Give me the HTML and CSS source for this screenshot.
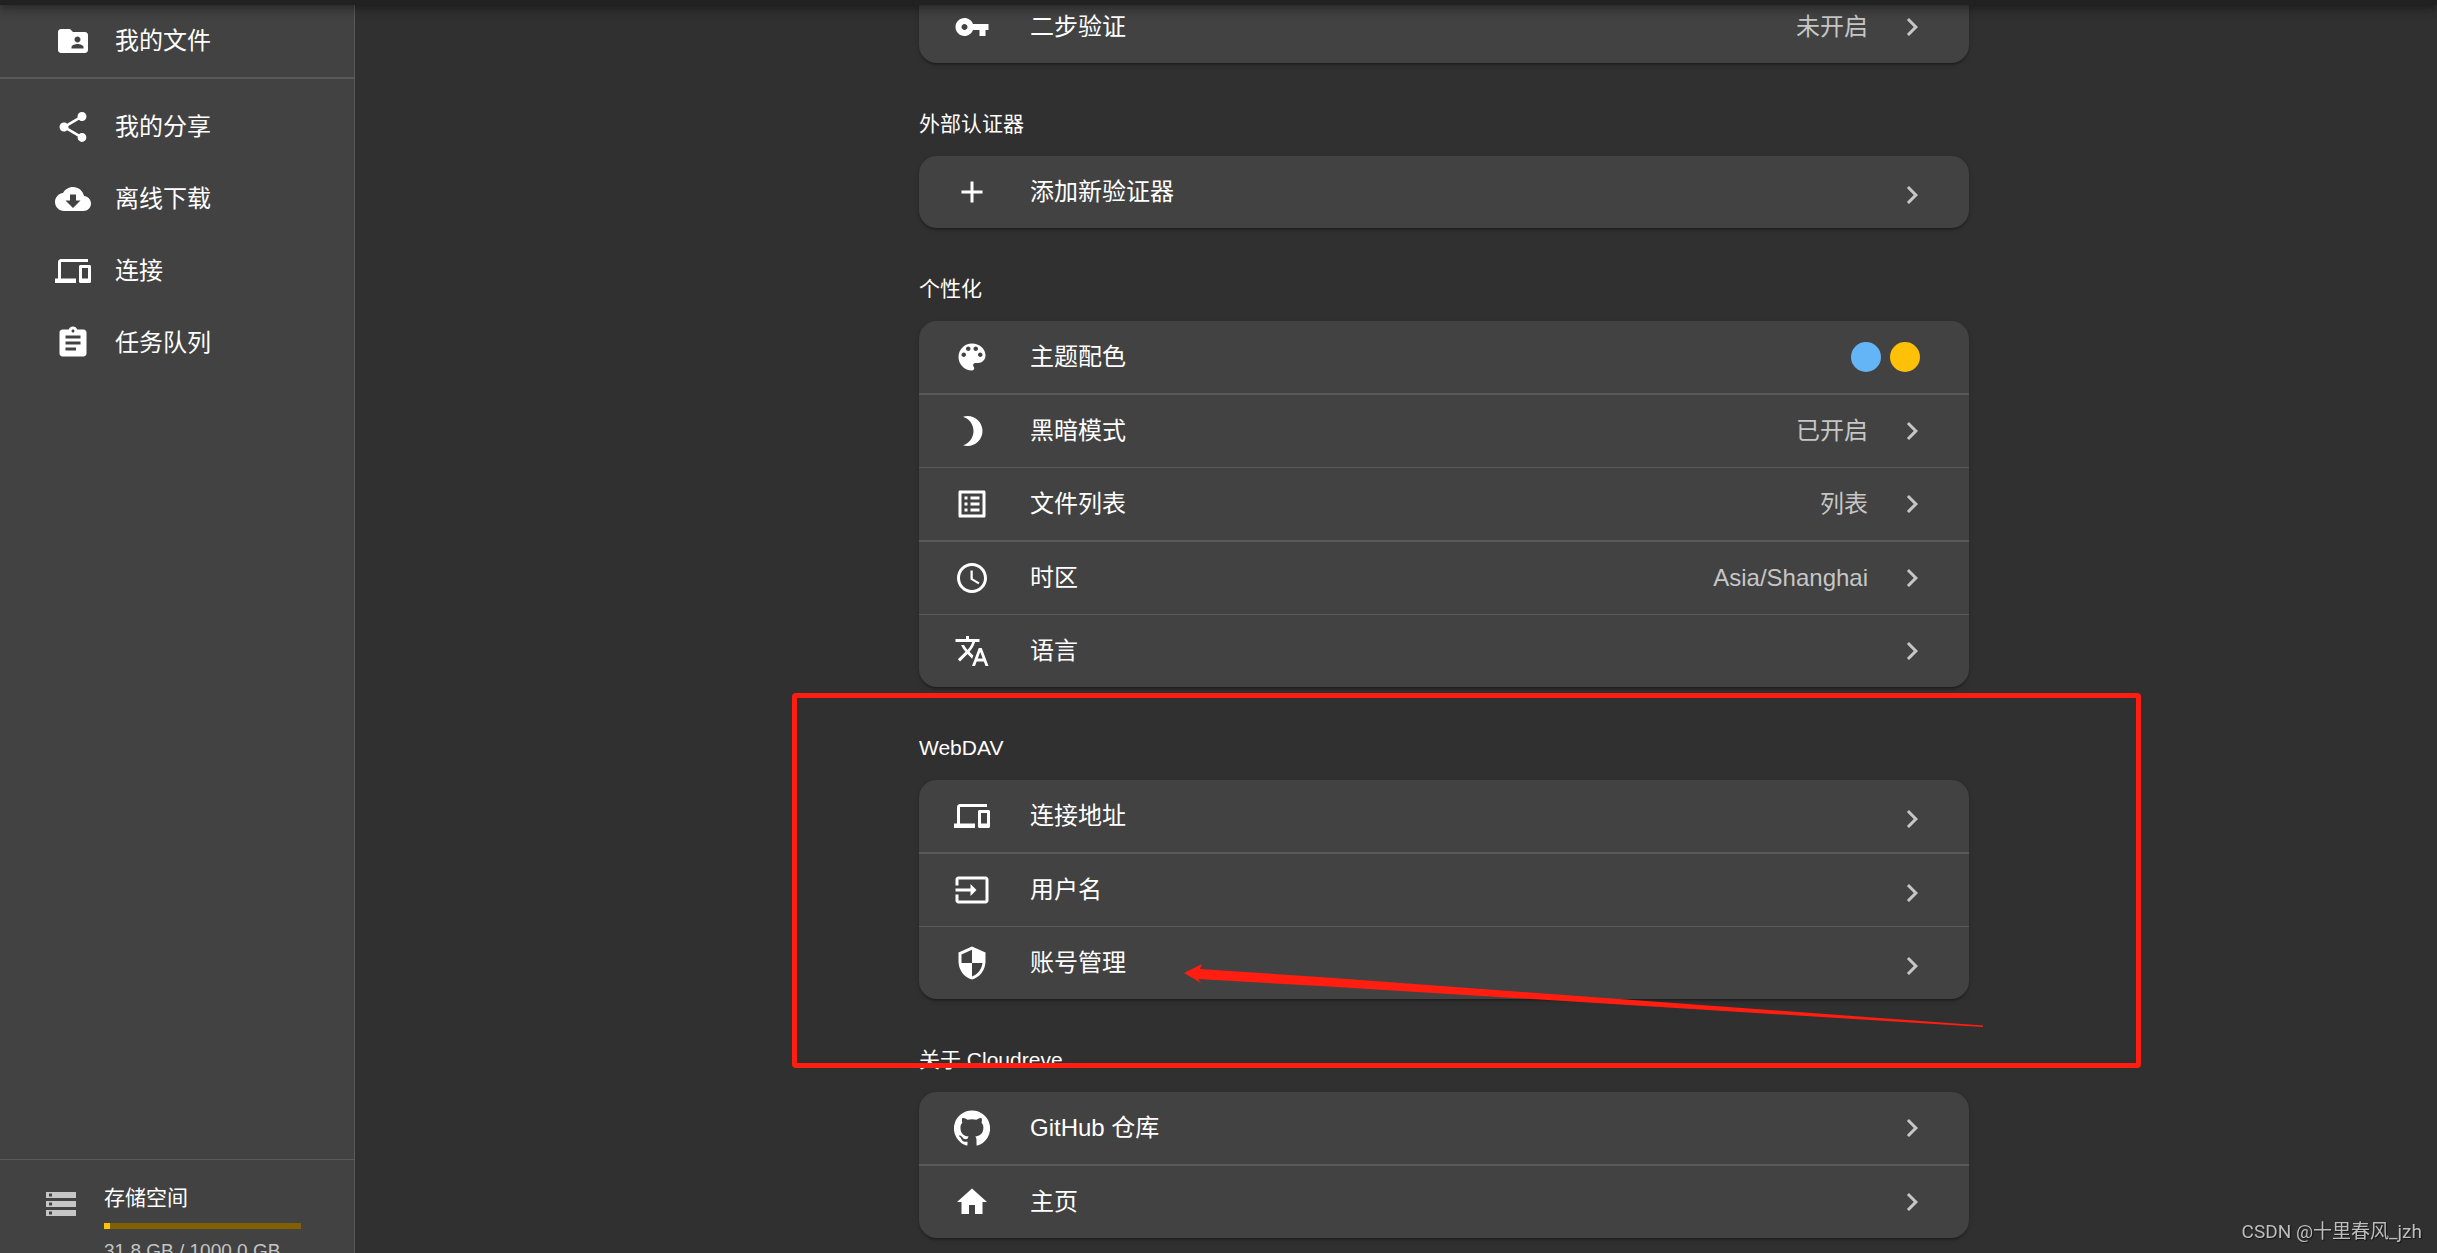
FILE: index.html
```html
<!DOCTYPE html>
<html lang="zh-CN">
<head>
<meta charset="utf-8">
<meta name="viewport" content="width=device-width, initial-scale=1">
<title>Cloudreve</title>
<link rel="stylesheet" href="styles.css">
</head>
<body>
<svg class="sprite" aria-hidden="true">
  <symbol id="chevron" viewBox="0 0 24 24"><path d="M10 6L8.59 7.41 13.17 12l-4.58 4.59L10 18l6-6z"/></symbol>
  <symbol id="devices" viewBox="0 0 24 24"><path d="M4 6h18V4H4c-1.1 0-2 .9-2 2v11H0v3h14v-3H4V6zm19 2h-6c-.55 0-1 .45-1 1v10c0 .55.45 1 1 1h6c.55 0 1-.45 1-1V9c0-.55-.45-1-1-1zm-1 9h-4v-7h4v7z"/></symbol>
</svg>

<header class="topbar"></header>

<div class="layout">
  <aside class="sidebar">
    <nav class="nav">
      <a class="nav-item" href="#files">
        <svg class="icon" viewBox="0 0 24 24"><path d="M20 6h-8l-2-2H4c-1.1 0-1.99.9-1.99 2L2 18c0 1.1.9 2 2 2h16c1.1 0 2-.9 2-2V8c0-1.1-.9-2-2-2zm-5 3c1.1 0 2 .9 2 2s-.9 2-2 2-2-.9-2-2 .9-2 2-2zm4 8h-8v-1c0-1.33 2.67-2 4-2s4 .67 4 2v1z"/></svg>
        <span>我的文件</span>
      </a>
      <div class="nav-group">
        <a class="nav-item" href="#shares">
          <svg class="icon" viewBox="0 0 24 24"><path d="M18 16.08c-.76 0-1.44.3-1.96.77L8.91 12.7c.05-.23.09-.46.09-.7s-.04-.47-.09-.7l7.05-4.11c.54.5 1.25.81 2.04.81 1.66 0 3-1.34 3-3s-1.34-3-3-3-3 1.34-3 3c0 .24.04.47.09.7L8.04 9.81C7.5 9.31 6.79 9 6 9c-1.66 0-3 1.34-3 3s1.34 3 3 3c.79 0 1.5-.31 2.04-.81l7.12 4.16c-.05.21-.08.43-.08.65 0 1.61 1.31 2.92 2.92 2.92 1.61 0 2.92-1.31 2.92-2.92s-1.31-2.92-2.92-2.92z"/></svg>
          <span>我的分享</span>
        </a>
        <a class="nav-item" href="#download">
          <svg class="icon" viewBox="0 0 24 24"><path d="M19.35 10.04C18.67 6.59 15.64 4 12 4 9.11 4 6.6 5.64 5.35 8.04 2.34 8.36 0 10.91 0 14c0 3.31 2.69 6 6 6h13c2.76 0 5-2.24 5-5 0-2.64-2.05-4.78-4.65-4.96zM17 13l-5 5-5-5h3V9h4v4h3z"/></svg>
          <span>离线下载</span>
        </a>
        <a class="nav-item" href="#connect">
          <svg class="icon"><use href="#devices"/></svg>
          <span>连接</span>
        </a>
        <a class="nav-item" href="#tasks">
          <svg class="icon" viewBox="0 0 24 24"><path d="M19 3h-4.18C14.4 1.84 13.3 1 12 1c-1.3 0-2.4.84-2.82 2H5c-1.1 0-2 .9-2 2v14c0 1.1.9 2 2 2h14c1.1 0 2-.9 2-2V5c0-1.1-.9-2-2-2zm-7 0c.55 0 1 .45 1 1s-.45 1-1 1-1-.45-1-1 .45-1 1-1zm2 14H7v-2h7v2zm3-4H7v-2h10v2zm0-4H7V7h10v2z"/></svg>
          <span>任务队列</span>
        </a>
      </div>
    </nav>
    <div class="storage">
      <svg class="icon storage-icon" viewBox="0 0 24 24"><path d="M2 20h20v-4H2v4zm2-3h2v2H4v-2zM2 4v4h20V4H2zm4 3H4V5h2v2zm-4 7h20v-4H2v4zm2-3h2v2H4v-2z"/></svg>
      <div class="storage-body">
        <label class="storage-title" for="quota">存储空间</label>
        <progress class="storage-bar" id="quota" max="1000" value="31.8"></progress>
        <span class="storage-text">31.8 GB / 1000.0 GB</span>
      </div>
    </div>
  </aside>

  <main class="content">
    <div class="settings">
      <section class="section">
        <div class="card card-continued">
          <button class="row" type="button">
            <svg class="icon" viewBox="0 0 24 24"><path d="M12.65 10C11.83 7.67 9.61 6 7 6c-3.31 0-6 2.69-6 6s2.69 6 6 6c2.61 0 4.83-1.67 5.65-4H17v4h4v-4h2v-4H12.65zM7 14c-1.1 0-2-.9-2-2s.9-2 2-2 2 .9 2 2-.9 2-2 2z"/></svg>
            <span class="row-title">二步验证</span>
            <span class="row-value">未开启</span>
            <svg class="icon chevron"><use href="#chevron"/></svg>
          </button>
        </div>
      </section>

      <section class="section">
        <h2 class="section-title">外部认证器</h2>
        <div class="card card-plain">
          <button class="row" type="button">
            <svg class="icon" viewBox="0 0 24 24"><path d="M19 13h-6v6h-2v-6H5v-2h6V5h2v6h6v2z"/></svg>
            <span class="row-title">添加新验证器</span>
            <svg class="icon chevron"><use href="#chevron"/></svg>
          </button>
        </div>
      </section>

      <section class="section">
        <h2 class="section-title">个性化</h2>
        <div class="card">
          <button class="row" type="button">
            <svg class="icon" viewBox="0 0 24 24"><path d="M12 3c-4.97 0-9 4.03-9 9s4.03 9 9 9c.83 0 1.5-.67 1.5-1.5 0-.39-.15-.74-.39-1.01-.23-.26-.38-.61-.38-.99 0-.83.67-1.5 1.5-1.5H16c2.76 0 5-2.24 5-5 0-4.42-4.03-8-9-8zm-5.5 9c-.83 0-1.5-.67-1.5-1.5S5.67 9 6.5 9 8 9.67 8 10.5 7.33 12 6.5 12zm3-4C8.67 8 8 7.33 8 6.5S8.67 5 9.5 5s1.5.67 1.5 1.5S10.33 8 9.5 8zm5 0c-.83 0-1.5-.67-1.5-1.5S13.67 5 14.5 5s1.5.67 1.5 1.5S15.33 8 14.5 8zm3 4c-.83 0-1.5-.67-1.5-1.5S16.67 9 17.5 9s1.5.67 1.5 1.5-.67 1.5-1.5 1.5z"/></svg>
            <span class="row-title">主题配色</span>
            <span class="swatches"><span class="swatch swatch-primary"></span><span class="swatch swatch-secondary"></span></span>
          </button>
          <button class="row" type="button">
            <svg class="icon" viewBox="0 0 24 24"><path d="M9 2c-1.05 0-2.05.16-3 .46 4.06 1.27 7 5.06 7 9.54 0 4.48-2.94 8.27-7 9.54.95.3 1.95.46 3 .46 5.52 0 10-4.48 10-10S14.52 2 9 2z"/></svg>
            <span class="row-title">黑暗模式</span>
            <span class="row-value">已开启</span>
            <svg class="icon chevron"><use href="#chevron"/></svg>
          </button>
          <button class="row" type="button">
            <svg class="icon" viewBox="0 0 24 24"><path d="M19 5v14H5V5h14m1.1-2H3.9c-.5 0-.9.4-.9.9v16.2c0 .4.4.9.9.9h16.2c.4 0 .9-.5.9-.9V3.9c0-.5-.5-.9-.9-.9zM11 7h6v2h-6V7zm0 4h6v2h-6v-2zm0 4h6v2h-6zM7 7h2v2H7zm0 4h2v2H7zm0 4h2v2H7z"/></svg>
            <span class="row-title">文件列表</span>
            <span class="row-value">列表</span>
            <svg class="icon chevron"><use href="#chevron"/></svg>
          </button>
          <button class="row" type="button">
            <svg class="icon" viewBox="0 0 24 24"><path d="M11.99 2C6.47 2 2 6.48 2 12s4.47 10 9.99 10C17.52 22 22 17.52 22 12S17.52 2 11.99 2zM12 20c-4.42 0-8-3.58-8-8s3.58-8 8-8 8 3.58 8 8-3.58 8-8 8z"/><path d="M12.5 7H11v6l5.25 3.15.75-1.23-4.5-2.67z"/></svg>
            <span class="row-title">时区</span>
            <span class="row-value">Asia/Shanghai</span>
            <svg class="icon chevron"><use href="#chevron"/></svg>
          </button>
          <button class="row" type="button">
            <svg class="icon" viewBox="0 0 24 24"><path d="M12.87 15.07l-2.54-2.51.03-.03c1.74-1.94 2.98-4.17 3.71-6.53H17V4h-7V2H8v2H1v1.99h11.17C11.5 7.92 10.44 9.75 9 11.35 8.07 10.32 7.3 9.19 6.69 8h-2c.73 1.63 1.73 3.17 2.98 4.56l-5.09 5.02L4 19l5-5 3.11 3.11.76-2.04zM18.5 10h-2L12 22h2l1.12-3h4.75L21 22h2l-4.5-12zm-2.62 7l1.62-4.33L19.12 17h-3.24z"/></svg>
            <span class="row-title">语言</span>
            <svg class="icon chevron"><use href="#chevron"/></svg>
          </button>
        </div>
      </section>

      <section class="section">
        <h2 class="section-title">WebDAV</h2>
        <div class="card card-plain">
          <button class="row" type="button">
            <svg class="icon"><use href="#devices"/></svg>
            <span class="row-title">连接地址</span>
            <svg class="icon chevron"><use href="#chevron"/></svg>
          </button>
          <button class="row" type="button">
            <svg class="icon" viewBox="0 0 24 24"><path d="M21 3.01H3c-1.1 0-2 .9-2 2V9h2V4.99h18v14.03H3V15H1v4.01c0 1.1.9 1.98 2 1.98h18c1.1 0 2-.88 2-1.98v-14c0-1.11-.9-2-2-2zM11 16l4-4-4-4v3H1v2h10v3z"/></svg>
            <span class="row-title">用户名</span>
            <svg class="icon chevron"><use href="#chevron"/></svg>
          </button>
          <button class="row" type="button">
            <svg class="icon" viewBox="0 0 24 24"><path d="M12 1L3 5v6c0 5.55 3.84 10.74 9 12 5.16-1.26 9-6.45 9-12V5l-9-4zm0 10.99h7c-.53 4.12-3.28 7.79-7 8.94V12H5V6.3l7-3.11v8.8z"/></svg>
            <span class="row-title">账号管理</span>
            <svg class="icon chevron"><use href="#chevron"/></svg>
          </button>
        </div>
        <div class="callout-frame"></div>
        <svg class="callout-arrow" viewBox="0 0 820 70"><path d="M19 13L37 4 35 9 155 17 495 42 818 65.500 818 67 495 47 155 26 33 19 36 23z"/></svg>
      </section>

      <section class="section">
        <h2 class="section-title">关于 Cloudreve</h2>
        <div class="card">
          <button class="row" type="button">
            <svg class="icon" viewBox="0 0 24 24"><path d="M12 .3a12 12 0 0 0-3.8 23.4c.6.1.8-.3.8-.6v-2c-3.3.7-4-1.6-4-1.6-.6-1.4-1.4-1.8-1.4-1.8-1-.7.1-.7.1-.7 1.2 0 1.9 1.2 1.9 1.2 1 1.8 2.8 1.3 3.5 1 0-.8.4-1.3.7-1.6-2.7-.3-5.5-1.3-5.5-6 0-1.2.5-2.3 1.3-3.1-.2-.4-.6-1.6 0-3.2 0 0 1-.3 3.4 1.2a11.5 11.5 0 0 1 6 0c2.3-1.5 3.3-1.2 3.3-1.2.6 1.6.2 2.8 0 3.2.9.8 1.3 1.9 1.3 3.2 0 4.6-2.8 5.6-5.5 5.9.5.4.9 1 .9 2.2v3.3c0 .3.1.7.8.6A12 12 0 0 0 12 .3"/></svg>
            <span class="row-title">GitHub 仓库</span>
            <svg class="icon chevron"><use href="#chevron"/></svg>
          </button>
          <button class="row" type="button">
            <svg class="icon" viewBox="0 0 24 24"><path d="M10 20v-6h4v6h5v-8h3L12 3 2 12h3v8z"/></svg>
            <span class="row-title">主页</span>
            <svg class="icon chevron"><use href="#chevron"/></svg>
          </button>
        </div>
      </section>
    </div>
  </main>
</div>

<div class="watermark">CSDN @十里春风_jzh</div>
</body>
</html>
```
FILE: styles.css
```css
:root {
  --bg: #303030;
  --paper: #424242;
  --divider: #595959;
  --text: #fff;
  --text-secondary: #c6c6c6;
  --callout: #ff1e10;
}

* {
  box-sizing: border-box;
}

body {
  margin: 0;
  height: 100vh;
  display: flex;
  flex-direction: column;
  overflow: hidden;
  background: var(--bg);
  color: var(--text);
  font-family: "Liberation Sans", "Noto Sans CJK SC", sans-serif;
  font-size: 24px;
  line-height: 36px;
}

.sprite {
  position: absolute;
  width: 0;
  height: 0;
}

.icon {
  flex: none;
  width: 36px;
  height: 36px;
  fill: currentColor;
}

/* App bar: only its lower edge stays in view */
.topbar {
  flex: none;
  position: relative;
  z-index: 3;
  height: 96px;
  margin-top: -91px;
  background: #212121;
  box-shadow: 0 3px 6px -1px rgba(0, 0, 0, .2), 0 6px 8px rgba(0, 0, 0, .14), 0 2px 15px rgba(0, 0, 0, .12);
}

.layout {
  flex: 1;
  min-height: 0;
  display: flex;
}

/* Sidebar */
.sidebar {
  flex: none;
  width: 355px;
  margin-bottom: -34px;
  display: flex;
  flex-direction: column;
  justify-content: space-between;
  background: var(--paper);
  border-right: 1px solid var(--divider);
}

.nav-item {
  display: flex;
  align-items: center;
  gap: 24px;
  height: 72px;
  padding: 0 24px 0 55px;
  color: inherit;
  text-decoration: none;
}

.nav-group {
  padding: 12px 0;
  border-top: 2px solid var(--divider);
}

.storage {
  display: flex;
  gap: 25px;
  padding: 21px 53px 24px 43px;
  border-top: 1px solid var(--divider);
}

.storage-icon {
  margin-top: 5px;
  color: var(--text-secondary);
}

.storage-body {
  flex: 1;
  display: flex;
  flex-direction: column;
}

.storage-title {
  font-size: 21px;
  line-height: 33px;
}

.storage-bar {
  appearance: none;
  display: block;
  width: 100%;
  height: 6px;
  margin: 9px 0 10px;
  border: 0;
  background: #806000;
}

.storage-bar::-webkit-progress-bar {
  background: #806000;
}

.storage-bar::-webkit-progress-value {
  background: #ffc107;
}

.storage-text {
  font-size: 19px;
  line-height: 24px;
  color: var(--text-secondary);
}

/* Settings */
.content {
  flex: 1;
  min-width: 0;
  padding-left: 96px;
}

.settings {
  max-width: 1050px;
  margin: -14px auto 0;
}

.section {
  position: relative;
  display: flow-root;
}

.section-title {
  margin: 44px 0 16px;
  font-size: 21px;
  font-weight: 400;
  line-height: 33px;
}

.card {
  overflow: hidden;
  border-radius: 18px;
  background: var(--paper);
  box-shadow: 0 3px 2px -2px rgba(0, 0, 0, .2), 0 2px 2px rgba(0, 0, 0, .14), 0 2px 5px rgba(0, 0, 0, .12);
}

.card-continued {
  border-top-left-radius: 0;
  border-top-right-radius: 0;
}

.row {
  display: flex;
  align-items: center;
  width: 100%;
  height: 72px;
  padding: 0 39px 0 35px;
  border: 0;
  background: none;
  color: inherit;
  font: inherit;
  text-align: left;
}

.row:nth-child(even) {
  height: 74px;
  border-top: 2px solid var(--divider);
}

.row:nth-child(odd):not(:first-child) {
  height: 73px;
  border-top: 1px solid var(--divider);
}

.row-title {
  flex: 1;
  margin-left: 40px;
}

.row-value {
  margin-right: 26px;
  color: var(--text-secondary);
}

.chevron {
  color: var(--text-secondary);
}

.card-plain .chevron {
  margin-top: 6px;
}

.swatches {
  display: flex;
  gap: 9px;
  margin-right: 10px;
}

.swatch {
  width: 30px;
  height: 30px;
  border-radius: 50%;
}

.swatch-primary {
  background: #64b5f6;
}

.swatch-secondary {
  background: #ffc107;
}

/* Callout drawn over the WebDAV section */
.callout-frame {
  position: absolute;
  z-index: 1;
  top: 6px;
  right: -172px;
  bottom: -69px;
  left: -127px;
  border: 5px solid var(--callout);
  border-radius: 4px;
  pointer-events: none;
}

.callout-arrow {
  position: absolute;
  z-index: 1;
  top: 273px;
  left: 246px;
  width: 820px;
  height: 70px;
  fill: var(--callout);
  pointer-events: none;
}

.watermark {
  position: fixed;
  right: 15px;
  bottom: 7px;
  color: #bdbdbd;
  font-family: Roboto, "Noto Sans CJK SC", sans-serif;
  font-size: 19px;
  line-height: 28px;
  text-shadow: 1px 1px 1px rgba(0, 0, 0, .6);
}
```
